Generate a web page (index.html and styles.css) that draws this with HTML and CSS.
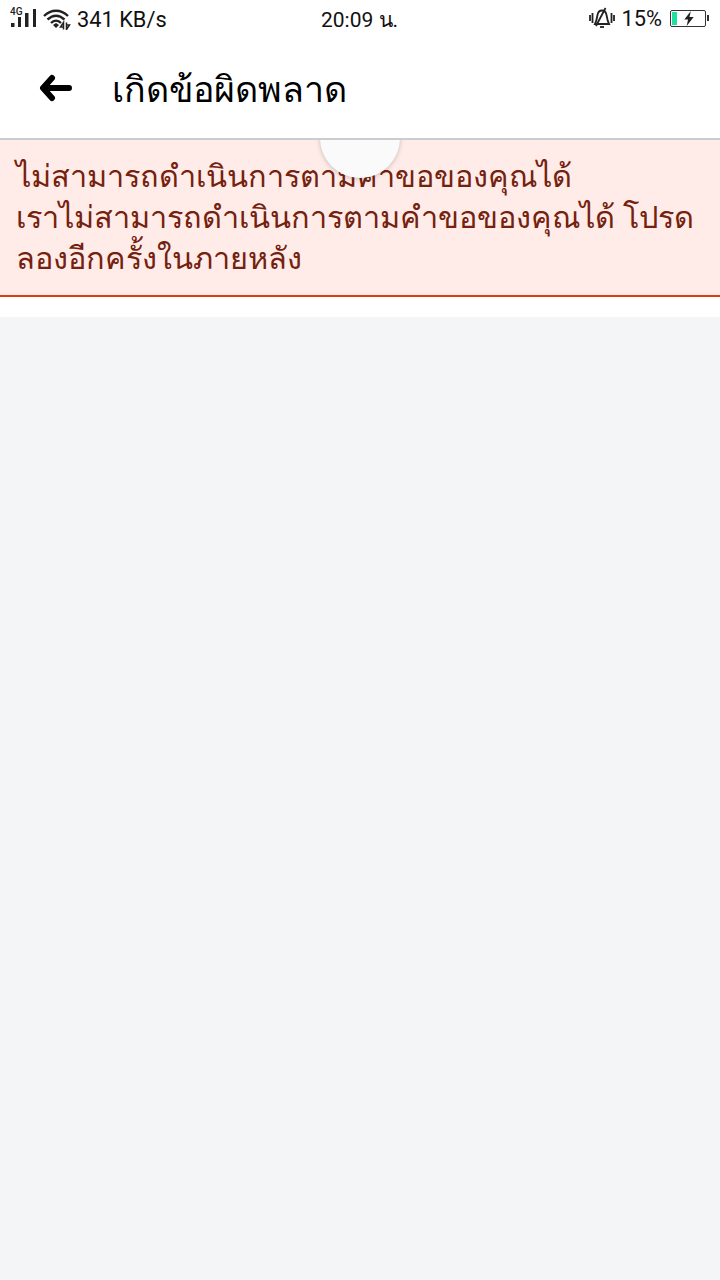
FILE: index.html
```html
<!DOCTYPE html>
<html lang="th">
    <head>
        <title>เกิดข้อผิดพลาด</title>
        <link rel="stylesheet" href="styles.css">
    </head>
    <body>
        <div class="status-bar">
            <div class="status-left">
                <svg class="icon-signal" width="27" height="28" viewBox="0 0 27 28">
                    <text x="0" y="10" class="net-label">4G</text>
                    <rect x="1" y="18" width="3.500" height="4" fill="#222"/>
                    <rect x="8" y="12" width="3" height="10" fill="#222"/>
                    <rect x="15" y="8" width="3.500" height="14" fill="#222"/>
                    <rect x="23" y="4" width="3" height="18" fill="#222"/>
                </svg>
                <svg class="icon-wifi" width="28" height="22" viewBox="0 0 28 22">
                    <path d="M1 8C8 1 18 1 25 8" fill="none" stroke="#222" stroke-width="2.400"/>
                    <path d="M4.500 11.500C10 6.500 16 6.500 21.500 11.500" fill="none" stroke="#222" stroke-width="2.400"/>
                    <path d="M8 15C11 12 15 12 18 15" fill="none" stroke="#222" stroke-width="2.400"/>
                    <path d="M10 17L13 15L16 17L13 20Z" fill="#222"/>
                    <path d="M20.500 21.500V14.500L17.500 19H20.500M23.500 14.500V21.500L26.500 17H23.500" fill="none" stroke="#222" stroke-width="1.500"/>
                </svg>
                <span>341 KB/s</span>
            </div>
            <div class="status-time">20:09 น.</div>
            <div class="status-right">
                <svg width="26" height="22" viewBox="0 0 26 22">
                    <path d="M6 17C7.500 14 8 11 8.500 8C9 5 11 3.500 13 3.500C15 3.500 17 5 17.500 8C18 11 18.500 14 20 17Z" fill="none" stroke="#222" stroke-width="1.800"/>
                    <path d="M11 20H15" stroke="#222" stroke-width="1.800"/>
                    <path d="M16.500 1L7 19" stroke="#222" stroke-width="1.800"/>
                    <path d="M1 8V14M3.500 6V16M22.500 6V16M25 8V14" stroke="#222" stroke-width="1.800"/>
                </svg>
                <span class="battery-pct">15%</span>
                <div class="battery">
                    <div class="battery-level"></div>
                    <svg class="battery-bolt" width="12" height="15" viewBox="0 0 12 16">
                        <path d="M8 0L1 9H5L3.500 16L11 6.500H6.500Z" fill="#222"/>
                    </svg>
                </div>
                <div class="battery-tip"></div>
            </div>
        </div>

        <div class="app-header">
            <svg class="back-arrow" width="34" height="28" viewBox="0 0 34 28">
                <path d="M13 4L4 14L13 24M5 14H30" fill="none" stroke="#000" stroke-width="6" stroke-linecap="round" stroke-linejoin="round"/>
            </svg>
            <h1>เกิดข้อผิดพลาด</h1>
        </div>

        <div class="error-banner">
            <div class="spinner-puck"></div>
            <div class="error-title">ไม่สามารถดำเนินการตามคำขอของคุณได้</div>
            <div class="error-text">เราไม่สามารถดำเนินการตามคำขอของคุณได้ โปรดลองอีกครั้งในภายหลัง</div>
        </div>

        <div class="page-gap"></div>
        <div class="page-body"></div>
    </body>
</html>
```

FILE: styles.css
```css
html, body
{
    margin: 0;
    height: 100%;
}

body
{
    display: flex;
    flex-direction: column;
    background-color: #ffffff;
    color: #000000;
    font-family: 'Noto Sans', 'Open Sans', Roboto, sans-serif;
    overflow: hidden;
}

.status-bar
{
    display: flex;
    align-items: center;
    justify-content: space-between;
    height: 38px;
    padding: 0 11px 0 10px;
    font-family: Roboto, sans-serif;
    font-size: 21.800px;
    color: #111111;
    position: relative;
}

.status-left
{
    display: flex;
    align-items: center;
    gap: 6px;
}

.net-label
{
    font-size: 10px;
    font-weight: 500;
    fill: #222222;
}

.status-time
{
    position: absolute;
    left: 321px;
    top: 3px;
    font-size: 21px;
}

.status-right
{
    display: flex;
    align-items: center;
    padding-bottom: 2px;
}

.battery-pct
{
    margin: 0 8px 0 7px;
}

.battery
{
    width: 34px;
    height: 15px;
    border: 1px solid #333333;
    border-radius: 2px;
    position: relative;
}

.battery-level
{
    width: 5px;
    height: 13px;
    margin: 1px;
    background-color: #1fe0a0;
}

.battery-bolt
{
    position: absolute;
    left: 12px;
    top: 0;
}

.battery-tip
{
    width: 2px;
    height: 6px;
    margin-left: 1px;
    background-color: #333333;
}

.app-header
{
    display: flex;
    align-items: center;
    height: 102px;
    padding-left: 39px;
    box-sizing: border-box;
    border-bottom: 2px solid #c9ccd1;
}

.app-header h1
{
    margin: 0 0 0 39px;
    padding-top: 2px;
    font-size: 35.800px;
    font-weight: 400;
}

.error-banner
{
    position: relative;
    overflow: hidden;
    height: 157px;
    box-sizing: border-box;
    padding: 15px 16px 0;
    background-color: #ffebe8;
    border-bottom: 2px solid #dd3c10;
    color: #74210e;
    font-size: 30.700px;
    line-height: 41px;
}

.spinner-puck
{
    position: absolute;
    left: 320px;
    top: -42px;
    width: 80px;
    height: 80px;
    border-radius: 50%;
    background-color: #fafafa;
    box-shadow: 0 1px 5px rgba(0, 0, 0, 0.2);
}

.page-gap
{
    height: 20px;
}

.page-body
{
    flex: 1;
    background-color: #f4f5f7;
}
```
